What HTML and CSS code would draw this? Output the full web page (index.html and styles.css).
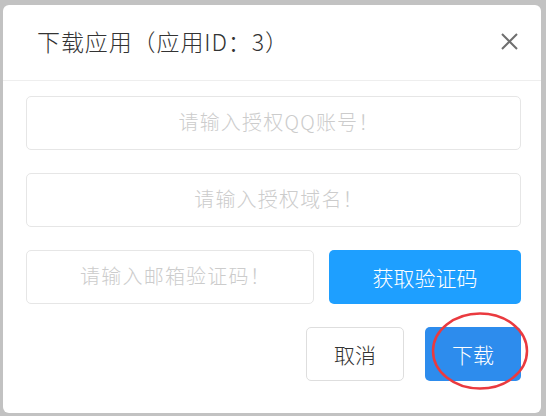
FILE: index.html
```html
<!DOCTYPE html>
<html lang="zh-CN">
<head>
<meta charset="utf-8">
<title>下载应用</title>
<link rel="stylesheet" href="styles.css">
</head>
<body>
<div class="dialog">
  <div class="dialog-header">
    <h1 class="dialog-title">下载应用（应用ID：3）</h1>
    <button class="close" aria-label="关闭">
      <svg width="17" height="17" viewBox="0 0 17 17"><path d="M1 1 L16 16 M16 1 L1 16" stroke="#6f6f6f" stroke-width="2" fill="none"/></svg>
    </button>
  </div>
  <div class="dialog-body">
    <div class="field"><span class="placeholder">请输入授权QQ账号！</span></div>
    <div class="field"><span class="placeholder">请输入授权域名！</span></div>
    <div class="row">
      <div class="field field-code"><span class="placeholder">请输入邮箱验证码！</span></div>
      <button class="btn btn-primary btn-code">获取验证码</button>
    </div>
  </div>
  <div class="dialog-footer">
    <button class="btn btn-default">取消</button>
    <div class="btn-wrap">
      <button class="btn btn-download">下载</button>
      <svg class="mark" width="100" height="80" viewBox="0 0 100 80"><ellipse cx="50" cy="40" rx="47" ry="37.5" fill="none" stroke="#ea3a3f" stroke-width="2.5"/></svg>
    </div>
  </div>
</div>
</body>
</html>
```

FILE: styles.css
```css
* { box-sizing: border-box; }
html, body { margin: 0; padding: 0; }
body {
  width: 546px;
  height: 416px;
  background: #c2c2c2;
  font-family: "Noto Sans CJK SC", "Noto Sans", "Liberation Sans", sans-serif;
  font-weight: 300;
  overflow: hidden;
  padding: 5px 5px 3px 3px;
}
.dialog {
  width: 538px;
  height: 408px;
  background: #fff;
  border-radius: 6px;
  display: flex;
  flex-direction: column;
}
.dialog-header {
  height: 76px;
  border-bottom: 1px solid #eeeeee;
  display: flex;
  align-items: center;
  justify-content: space-between;
  padding: 0 23px 0 34px;
}
.dialog-title {
  margin: -4px 0 0 0;
  font-size: 23px;
  font-weight: 300;
  color: #333;
  letter-spacing: 0.9px;
}
.close {
  border: 0;
  background: none;
  padding: 0;
  width: 17px;
  height: 17px;
  display: flex;
  margin-top: -2px;
}
.dialog-body {
  padding: 15px 20px 0 23px;
  display: flex;
  flex-direction: column;
  gap: 23px;
}
.field {
  height: 54px;
  border: 1px solid #e6e6e6;
  border-radius: 5px;
  display: flex;
  align-items: center;
  justify-content: center;
}
.placeholder {
  color: #cccccc;
  font-size: 20px;
  letter-spacing: 1.2px;
  margin-top: -4px;
  padding-left: 11px;
}
.row {
  display: flex;
  gap: 15px;
}
.field-code { width: 288px; }
.btn {
  height: 54px;
  border-radius: 5px;
  font-family: inherit;
  font-weight: 300;
  font-size: 21px;
  padding: 0;
  cursor: pointer;
}
.btn-primary {
  background: #1e9fff;
  border: 0;
  color: #fff;
}
.btn-code { width: 192px; }
.dialog-footer {
  padding: 23px 20px 0 0;
  display: flex;
  justify-content: flex-end;
  gap: 21px;
}
.btn-default {
  width: 98px;
  background: #fff;
  border: 1px solid #dedede;
  color: #333;
}
.btn-wrap {
  position: relative;
  width: 96px;
  height: 54px;
}
.btn-download {
  width: 96px;
  background: #2d8ced;
  border: 0;
  color: #fff;
}
.mark {
  position: absolute;
  left: 5px;
  top: -16px;
  pointer-events: none;
}
```
